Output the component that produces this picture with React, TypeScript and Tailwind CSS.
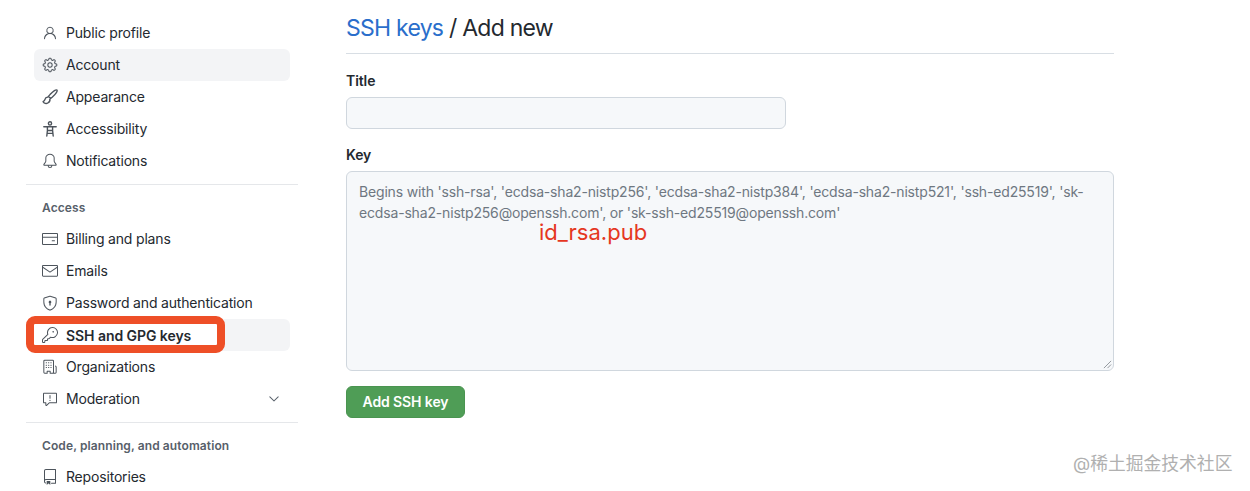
import type { ComponentType, ReactNode } from "react"
import {
  GoPerson,
  GoGear,
  GoBell,
  GoCreditCard,
  GoMail,
  GoShieldLock,
  GoKey,
  GoOrganization,
  GoReport,
  GoChevronDown,
  GoRepo,
} from "react-icons/go"

type IconType = ComponentType<{ className?: string; size?: number }>

function BrushIcon({ className }: { className?: string; size?: number }) {
  return (
    <svg viewBox="0 0 16 16" width={16} height={16} fill="none" stroke="currentColor" strokeWidth={1.4} strokeLinejoin="round" className={className}>
      <path d="M14.9 1.1c-.9-.9-3.4.8-6.9 4.5L6.4 7.4l2.2 2.2 1.8-1.6c3.7-3.5 5.4-6 4.5-6.9Z" />
      <path d="M6.1 8.2c-1.6-.2-2.8.7-3.1 2.1-.2.9-.5 1.6-1.9 2.4.8 1.8 3.2 2.1 4.7 1.3 1.7-.9 2.5-2.4 2-4.1" />
    </svg>
  )
}

function AccessibilityIcon({ className }: { className?: string; size?: number }) {
  return (
    <svg viewBox="0 0 16 16" width={16} height={16} fill="none" stroke="currentColor" strokeWidth={1.4} strokeLinecap="round" strokeLinejoin="round" className={className}>
      <circle cx="8" cy="2.4" r="1.6" />
      <path d="M1.8 5.8h12.4M5.4 5.8v3.7h5.2V5.8M5.4 9.5 4.8 15M10.6 9.5l.6 5.5M5 12.4h6" />
    </svg>
  )
}

function NavItem({
  icon: Icon,
  children,
  active,
  chevron,
}: {
  icon: IconType
  children: ReactNode
  active?: boolean
  chevron?: boolean
}) {
  return (
    <div
      className={`flex h-8 items-center rounded-md pl-2 pr-2 ${active ? "bg-[#f3f4f6]" : ""}`}
    >
      <Icon size={16} className="mr-2 shrink-0 text-[#4d545c]" />
      <span className="pb-[2px] text-[14px] tracking-[-0.18px] text-[#24292f]">{children}</span>
      {chevron && <GoChevronDown size={16} className="ml-auto mr-0 text-[#57606a]" />}
    </div>
  )
}

function SectionTitle({ children, className }: { children: ReactNode; className: string }) {
  return (
    <div className={`flex items-center pl-2 text-[12px] font-semibold tracking-[0.1px] text-[#57606a] ${className}`}>
      {children}
    </div>
  )
}

function Sidebar() {
  return (
    <aside className="relative ml-[26px] w-[272px] shrink-0 pt-[17px]">
      <nav className="ml-2 mr-2">
        <NavItem icon={GoPerson}>Public profile</NavItem>
        <NavItem icon={GoGear} active>
          Account
        </NavItem>
        <NavItem icon={BrushIcon}>Appearance</NavItem>
        <NavItem icon={AccessibilityIcon}>Accessibility</NavItem>
        <NavItem icon={GoBell}>Notifications</NavItem>
      </nav>
      <div className="mt-[7px] h-px bg-[#e5e7ea]" />
      <nav className="ml-2 mr-2 mt-[7px]">
        <SectionTitle className="h-[31px]">Access</SectionTitle>
        <NavItem icon={GoCreditCard}>Billing and plans</NavItem>
        <NavItem icon={GoMail}>Emails</NavItem>
        <NavItem icon={GoShieldLock}>Password and authentication</NavItem>
        <NavItem icon={GoKey} active>
          <span className="font-semibold">SSH and GPG keys</span>
        </NavItem>
        <NavItem icon={GoOrganization}>Organizations</NavItem>
        <NavItem icon={GoReport} chevron>
          Moderation
        </NavItem>
      </nav>
      <div className="mt-[7px] h-px bg-[#e5e7ea]" />
      <nav className="ml-2 mr-2 mt-[7px]">
        <SectionTitle className="h-[31px]">Code, planning, and automation</SectionTitle>
        <NavItem icon={GoRepo}>Repositories</NavItem>
      </nav>
      {/* red annotation drawn over the selected row */}
      <div className="absolute left-0 top-[316px] flex h-[37px] w-[199px] items-center rounded-[9px] border-[8px] border-[#ee4f27] bg-white pl-2">
        <GoKey size={16} className="mr-2 shrink-0 text-[#4d545c]" />
        <span className="pt-px text-[14px] font-semibold tracking-[-0.06px] text-[#24292f]">SSH and GPG keys</span>
      </div>
    </aside>
  )
}

function Main() {
  return (
    <main className="relative ml-[48px] w-[768px] shrink-0">
      <div className="flex h-[54px] items-end border-b border-[#d8dee4] pb-[7px]">
        <h1 className="text-[23px] leading-[36px] tracking-[-0.75px] text-[#24292f]">
          <span className="text-[#2a6ecb]">SSH keys</span> / Add new
        </h1>
      </div>
      <form className="mt-[17px]">
        <label className="block h-5 text-[14px] font-semibold leading-5 tracking-[-0.1px] text-[#24292f]">Title</label>
        <div className="mt-[6px] h-8 w-[440px] rounded-md border border-[#d0d7de] bg-[#f6f8fa]" />
        <label className="mt-4 block h-5 text-[14px] font-semibold leading-5 tracking-[-0.1px] text-[#24292f]">Key</label>
        <div className="relative mt-[6px] h-[200px] rounded-md border border-[#d0d7de] bg-[#f6f8fa] px-3 py-[9px] text-[14px] leading-[21px] tracking-[-0.17px] text-[#6e7781]">
          <p className="w-[728px]">
            Begins with 'ssh-rsa', 'ecdsa-sha2-nistp256', 'ecdsa-sha2-nistp384', 'ecdsa-sha2-nistp521', 'ssh-ed25519', 'sk-ecdsa-sha2-nistp256@openssh.com', or 'sk-ssh-ed25519@openssh.com'
          </p>
          <span className="absolute left-[192px] top-[44px] text-[22px] leading-[32px] tracking-normal text-[#e5371f]">id_rsa.pub</span>
          <svg viewBox="0 0 10 10" className="absolute bottom-[1px] right-[1px] h-[9px] w-[9px]" stroke="#8a8f94" fill="none">
            <path d="M1 9 9 1M5 9l4-4" />
          </svg>
        </div>
        <button
          type="button"
          className="mt-[15px] h-8 w-[119px] rounded-md border border-[#4a9450] bg-[#4f9d56] pb-[2px] text-[14px] font-semibold tracking-[-0.1px] text-white"
        >
          Add SSH key
        </button>
      </form>
    </main>
  )
}

export default function App() {
  return (
    <div
      className="relative flex h-[491px] w-[1250px] overflow-hidden bg-white"
      style={{ fontFamily: "Inter, 'Noto Sans CJK SC', sans-serif" }}
    >
      <Sidebar />
      <Main />
      <div className="absolute left-[1073px] top-[454px] text-[17.8px] leading-[20px] text-[#b0b0b0]">
        @稀土掘金技术社区
      </div>
    </div>
  )
}
